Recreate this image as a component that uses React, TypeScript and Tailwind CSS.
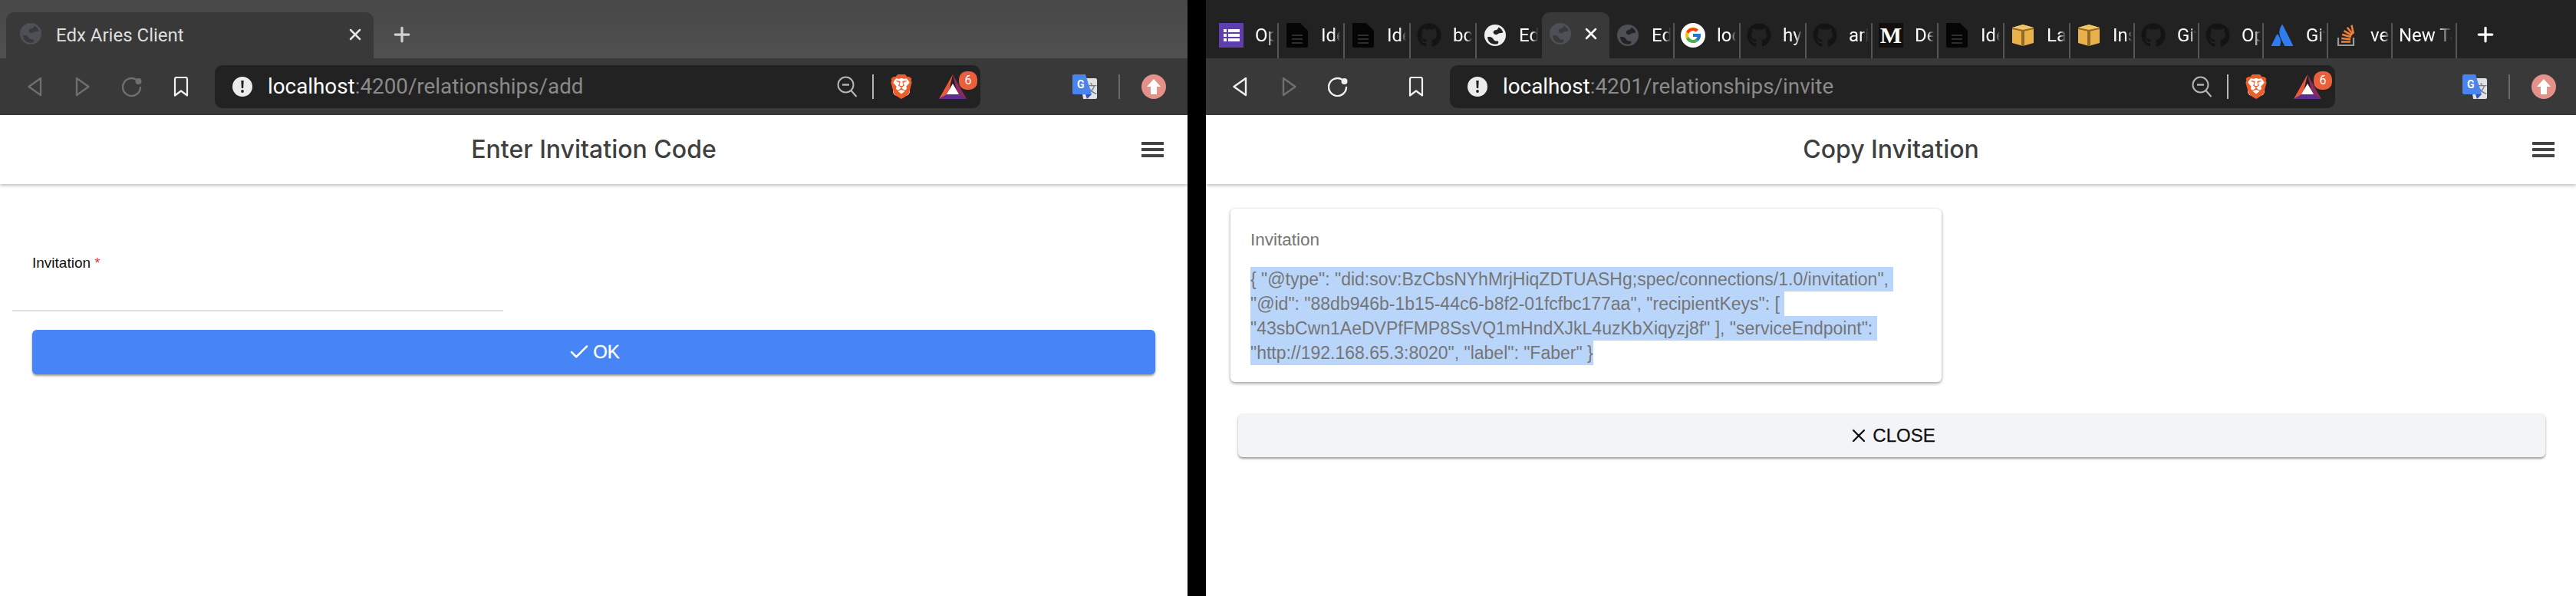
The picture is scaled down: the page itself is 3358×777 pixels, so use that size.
import { Check, Plus, X } from "lucide-react";
import { FaGithub } from "react-icons/fa";
import { FcGoogle } from "react-icons/fc";
import { SiAtlassian, SiBrave } from "react-icons/si";

const page = "font-['Liberation_Sans',Arial,sans-serif]";
const title = "font-['Inter','Liberation_Sans',sans-serif]";
const ui = "font-['Roboto','Liberation_Sans',sans-serif]";

function Globe({ fill, cut }: { fill: string; cut: string }) {
  return (
    <svg viewBox="0 0 28 28" className="h-[28px] w-[28px] shrink-0">
      <circle cx="14" cy="14" r="14" fill={fill} />
      <path d="M14 2.5c3 .2 6 1.500 8 3.800-1.200 1.800-3 2-4.500 3.400-1.400 1.300-1 3-3.500 3.300-2.800.3-4.500-1.500-3.800-3.700.5-1.600 2.500-2 3.300-3.300.5-1 .3-2.400.5-3.500z" fill={cut} transform="rotate(24 14 14)" />
      <path d="M4 16.500c2-.8 4.500-.5 6.200.8 1.600 1.200 2 3.200 3.800 3.900 1.500.5 3-.2 4 .8.800.9.200 2.300-.8 3.300-3.500 1-7.800.2-10.400-2.300C5.200 21.500 4.300 19 4 16.500z" fill={cut} />
    </svg>
  );
}

function DocIcon() {
  return (
    <svg viewBox="0 0 28 32" className="h-[32px] w-[28px] shrink-0">
      <path d="M1 0h17l10 10v20a2 2 0 0 1-2 2H2a2 2 0 0 1-2-2V1a1 1 0 0 1 1-1z" fill="#050505" />
      <path d="M7 15h14v2H7zM7 20h14v2H7zM7 25h14v2H7z" fill="#2e2e2e" />
    </svg>
  );
}

function FormsIcon() {
  return (
    <svg viewBox="0 0 32 32" className="h-[32px] w-[32px] shrink-0">
      <rect width="32" height="32" fill="#5f3eb0" />
      <path d="M6 8h4v4H6zM12 8h15v4H12zM6 14h4v4H6zM12 14h15v4H12zM6 20h4v4H6zM12 20h15v4H12z" fill="#fff" />
    </svg>
  );
}

function BoxIcon() {
  return (
    <svg viewBox="0 0 28 28" className="h-[28px] w-[28px] shrink-0">
      <path d="M14 0l14 4v20l-14 4-14-4V4z" fill="#e8b14a" />
      <path d="M0 4l14-4 14 4-14 3z" fill="#f2c566" />
      <path d="M12 7h4v21h-4z" fill="#8f6a2a" />
      <path d="M0 4l14 3 14-3v2L14 9 0 6z" fill="#8f6a2a" />
    </svg>
  );
}

function StackIcon() {
  return (
    <svg viewBox="0 0 24 28" className="h-[28px] w-[24px] shrink-0">
      <path d="M1 17v10h20V17" fill="none" stroke="#9a9a9a" strokeWidth="2.200" />
      <path d="M5 22.500h12M5.200 18l12 1.200M6.200 13l11.600 3.200M8.500 8.200l10.300 6M12.800 3.800l7.200 9M18.500.8l2.300 11" fill="none" stroke="#ef8236" strokeWidth="2.600" />
    </svg>
  );
}

function BackIcon({ color, flip }: { color: string; flip?: boolean }) {
  return (
    <svg viewBox="0 0 20 26" className={`h-[26px] w-[20px] ${flip ? "-scale-x-100" : ""}`}>
      <path d="M18 2L2.500 13 18 24z" fill="none" stroke={color} strokeWidth="2.400" strokeLinejoin="round" />
    </svg>
  );
}

function ReloadIcon({ color }: { color: string }) {
  return (
    <svg viewBox="0 0 26 26" className="h-[26px] w-[26px]">
      <path d="M17.500 3.200A11.500 11.500 0 1 0 24 14" fill="none" stroke={color} strokeWidth="2.400" strokeLinecap="round" />
      <circle cx="21.500" cy="6" r="4" fill={color} />
    </svg>
  );
}

function BookmarkIcon() {
  return (
    <svg viewBox="0 0 20 26" className="h-[26px] w-[20px]">
      <path d="M2 3a2 2 0 0 1 2-2h12a2 2 0 0 1 2 2v21.500l-8-6-8 6z" fill="none" stroke="#f2f2f2" strokeWidth="2.200" strokeLinejoin="round" />
    </svg>
  );
}

function InfoIcon() {
  return (
    <svg viewBox="0 0 26 26" className="h-[26px] w-[26px] shrink-0">
      <circle cx="13" cy="13" r="13" fill="#ececec" />
      <path d="M11.300 5h3.400l-.5 10h-2.400z" fill="#222" />
      <circle cx="13" cy="19" r="1.900" fill="#222" />
    </svg>
  );
}

function ZoomOutIcon() {
  return (
    <svg viewBox="0 0 26 28" className="h-[28px] w-[26px] shrink-0">
      <circle cx="11.500" cy="11.500" r="10" fill="none" stroke="#b5b5b5" strokeWidth="2" />
      <path d="M7 11.500h9" stroke="#b5b5b5" strokeWidth="2.400" />
      <path d="M18.500 19l7 8" stroke="#b5b5b5" strokeWidth="2.200" />
    </svg>
  );
}

function MenuIcon() {
  return (
    <svg viewBox="0 0 29 20" className="h-[20px] w-[29px] justify-self-end">
      <path d="M0 0h29v4H0zM0 8h29v4H0zM0 16h29v4H0z" fill="#444444" />
    </svg>
  );
}

function BraveIcon() {
  return (
    <div className="relative h-[36px] w-[32px] shrink-0">
      <div className="absolute inset-x-[5px] inset-y-[6px] rounded-[6px] bg-white" />
      <SiBrave className="absolute inset-0 h-[36px] w-[32px] text-[#ee5e2a]" />
    </div>
  );
}

function BatIcon() {
  return (
    <div className="relative h-[32px] w-[36px] shrink-0">
      <svg viewBox="0 0 36 32" className="h-[32px] w-[36px]">
        <path d="M18 0L0 32l12-6z" fill="#e9573f" />
        <path d="M18 0l18 32-12-6z" fill="#8c2a5f" />
        <path d="M0 32l12-7h12l12 7z" fill="#5e2d8f" />
        <path d="M18 12l8 14H10z" fill="#fff" />
      </svg>
      <span className={`absolute -top-[4px] -right-[14px] flex h-[24px] w-[24px] items-center justify-center rounded-[10px] bg-[#e9603c] text-[16px] leading-none text-white ${ui}`}>
        6
      </span>
    </div>
  );
}

function TranslateIcon() {
  return (
    <svg viewBox="0 0 32 32" className="h-[32px] w-[32px] shrink-0">
      <path d="M10 5h20a2 2 0 0 1 2 2v23a2 2 0 0 1-2 2H14z" fill="#dfe1e3" />
      <text x="17" y="24" fontSize="15" fill="#6d7c82" fontFamily="Noto Sans CJK SC, sans-serif">文</text>
      <path d="M2 0h15l8 26H2a2 2 0 0 1-2-2V2a2 2 0 0 1 2-2z" fill="#4a84ee" />
      <path d="M17 26h8l-6 6z" fill="#3a4fb0" />
      <text x="6" y="18" fontSize="14" fontWeight="700" fill="#fff" fontFamily="Roboto, sans-serif">G</text>
    </svg>
  );
}

function UploadBadge() {
  return (
    <div className="flex h-[32px] w-[32px] shrink-0 items-center justify-center rounded-full bg-[#e4918a]">
      <svg viewBox="0 0 18 20" className="h-[20px] w-[18px]">
        <path d="M9 0l9 10h-5v10H5V10H0z" fill="#fff" />
      </svg>
    </div>
  );
}

type TabItem = {
  icon: React.ReactNode;
  label: string;
  width: string;
  noDivider?: boolean;
};

const github = <FaGithub className="h-[32px] w-[32px] shrink-0 text-[#141414]" />;
const whiteGlobe = <Globe fill="#f0f0f0" cut="#222222" />;
const greyGlobe = <Globe fill="#4d5056" cut="#222222" />;

const tabs: TabItem[] = [
  { icon: <FormsIcon />, label: "Open", width: "w-[86px]" },
  { icon: <DocIcon />, label: "Iden", width: "w-[86px]" },
  { icon: <DocIcon />, label: "Iden", width: "w-[86px]" },
  { icon: github, label: "bcgo", width: "w-[86px]" },
  { icon: whiteGlobe, label: "Edx", width: "w-[85px]", noDivider: true },
];

const tabsAfter: TabItem[] = [
  { icon: greyGlobe, label: "Edx", width: "w-[85px]" },
  {
    icon: (
      <div className="flex h-[32px] w-[32px] shrink-0 items-center justify-center rounded-full bg-white">
        <FcGoogle className="h-[24px] w-[24px]" />
      </div>
    ),
    label: "local",
    width: "w-[86px]",
  },
  { icon: github, label: "hype", width: "w-[86px]" },
  { icon: github, label: "aries", width: "w-[86px]" },
  {
    icon: (
      <div className="flex h-[32px] w-[32px] shrink-0 items-center justify-center bg-[#120f0e] font-['Liberation_Serif',serif] text-[30px] leading-none font-bold text-white">
        M
      </div>
    ),
    label: "Dec",
    width: "w-[86px]",
  },
  { icon: <DocIcon />, label: "Iden", width: "w-[86px]" },
  { icon: <BoxIcon />, label: "Lab", width: "w-[86px]" },
  { icon: <BoxIcon />, label: "Inst", width: "w-[84px]" },
  { icon: github, label: "Git", width: "w-[84px]" },
  { icon: github, label: "Ope", width: "w-[84px]" },
  { icon: <SiAtlassian className="h-[28px] w-[28px] shrink-0 text-[#2f7bf0]" />, label: "Git", width: "w-[84px]" },
  { icon: <StackIcon />, label: "vers", width: "w-[84px]" },
];

function CompactTab({ tab }: { tab: TabItem }) {
  return (
    <div className={`flex h-[46px] shrink-0 items-start gap-[15px] pl-[8px] ${tab.width} ${tab.noDivider ? "" : "border-r-2 border-[#555555]"}`}>
      <div className="flex h-[32px] w-[32px] shrink-0 items-center justify-center">{tab.icon}</div>
      <span className={`h-[32px] w-[25px] overflow-hidden text-[24px] leading-[32px] whitespace-nowrap text-white [mask-image:linear-gradient(to_right,black_65%,transparent)] ${ui}`}>
        {tab.label}
      </span>
    </div>
  );
}

function RightTabStrip() {
  return (
    <div className="flex h-[76px] items-end bg-[#222222] pl-[9px]">
      {tabs.map((tab, i) => (
        <CompactTab key={i} tab={tab} />
      ))}
      <div className="flex h-[60px] w-[88px] shrink-0 items-start gap-[14px] rounded-t-[10px] bg-[#393939] pt-[14px] pl-[10px]">
        <Globe fill="#4d5056" cut="#393939" />
        <X className="mt-[2px] h-[24px] w-[24px] text-white" strokeWidth={2.5} />
      </div>
      {tabsAfter.map((tab, i) => (
        <CompactTab key={i} tab={tab} />
      ))}
      <div className={`flex h-[46px] w-[84px] shrink-0 border-r-2 border-[#555555] pl-[8px] text-[24px] leading-[32px] whitespace-nowrap text-white ${ui}`}>
        <span className="w-[70px] overflow-hidden [mask-image:linear-gradient(to_right,black_70%,transparent)]">New Tab</span>
      </div>
      <div className="flex h-[46px] items-start pl-[22px]">
        <Plus className="h-[30px] w-[30px] text-white" strokeWidth={2.6} />
      </div>
    </div>
  );
}

function LeftTabStrip() {
  return (
    <div className="flex h-[76px] items-end bg-linear-to-b from-[#484848] to-[#505050] pl-[8px]">
      <div className="flex h-[60px] w-[479px] items-start rounded-t-[10px] bg-[#393939] pt-[14px] pl-[18px]">
        <Globe fill="#4d5056" cut="#393939" />
        <span className={`ml-[19px] text-[24px] leading-[32px] text-[#dedede] ${ui}`}>Edx Aries Client</span>
        <X className="mt-[3px] mr-[12px] ml-auto h-[24px] w-[24px] text-[#e4e4e4]" strokeWidth={2.5} />
      </div>
      <div className="flex h-[60px] items-start pt-[14px] pl-[22px]">
        <Plus className="h-[30px] w-[30px] text-[#d0d0d0]" strokeWidth={2.6} />
      </div>
    </div>
  );
}

function AddressBar({ port, path, width }: { port: string; path: string; width: string }) {
  return (
    <div className={`flex h-[56px] shrink-0 items-center rounded-[10px] bg-[#222222] pr-[18px] pl-[23px] ${width}`}>
      <InfoIcon />
      <span className={`ml-[20px] text-[27.8px] leading-none whitespace-nowrap text-[#8a8a8a] ${ui}`}>
        <span className="text-white">localhost</span>:{port}
        {path}
      </span>
      <div className="ml-auto flex items-center">
        <ZoomOutIcon />
        <div className="mx-[20px] h-[32px] w-[2px] bg-[#b5b5b5]" />
        <BraveIcon />
        <div className="w-[33px]" />
        <BatIcon />
      </div>
    </div>
  );
}

function ToolbarExtras({ gap }: { gap: string }) {
  return (
    <div className={`flex items-center ${gap}`}>
      <TranslateIcon />
      <div className="mx-[28px] h-[32px] w-[2px] bg-[#6a6a6a]" />
      <UploadBadge />
    </div>
  );
}

function PageHeader({ text, pad }: { text: string; pad: string }) {
  return (
    <header className={`grid h-[90px] grid-cols-[1fr_auto_1fr] items-center bg-white shadow-[0_2px_4px_rgba(0,0,0,0.25)] ${pad}`}>
      <div />
      <h1 className={`text-[32px] leading-none font-medium text-[#3f3f3f] ${title}`}>{text}</h1>
      <MenuIcon />
    </header>
  );
}

function InviteLine({ text, extra }: { text: string; extra: string }) {
  return <span className={`block h-[32px] w-fit bg-[#b9d5fa] ${extra}`}>{text}</span>;
}

export default function App() {
  return (
    <div className="flex h-[777px] w-[3358px] overflow-hidden bg-black">
      <section className="flex w-[1548px] shrink-0 flex-col bg-white">
        <LeftTabStrip />
        <div className="flex h-[74px] items-center bg-[#393939] pl-[35px]">
          <BackIcon color="#6f6f6f" />
          <div className="ml-[43px]"><BackIcon color="#6f6f6f" flip /></div>
          <div className="ml-[41px]"><ReloadIcon color="#6f6f6f" /></div>
          <div className="mr-[34px] ml-[41px]"><BookmarkIcon /></div>
          <AddressBar port="4200" path="/relationships/add" width="w-[998px]" />
          <ToolbarExtras gap="ml-[120px]" />
        </div>
        <PageHeader text="Enter Invitation Code" pad="px-[31px]" />
        <form className="flex flex-col">
          <div className="mt-[91px] ml-[16px] h-[75px] w-[640px] border-b-2 border-[#e0e0e0] pl-[26px]">
            <label className={`text-[19px] leading-[24px] text-[#111111] ${page}`}>
              Invitation <span className="text-[#e53935]">*</span>
            </label>
          </div>
          <button
            type="button"
            className={`mt-[24px] mr-[42px] ml-[42px] flex h-[58px] items-center justify-center gap-[3px] rounded-[6px] bg-[#4784f6] text-[24px] text-white shadow-[0_2px_3px_rgba(0,0,0,0.4)] [-webkit-text-stroke:0.3px_currentColor] ${page}`}
          >
            <Check className="h-[30px] w-[30px]" strokeWidth={2} />
            OK
          </button>
        </form>
      </section>

      <div className="w-[24px] shrink-0" />

      <section className="flex min-w-0 flex-1 flex-col bg-white">
        <RightTabStrip />
        <div className="flex h-[74px] items-center bg-[#393939] pl-[34px]">
          <BackIcon color="#f0f0f0" />
          <div className="ml-[45px]"><BackIcon color="#6f6f6f" flip /></div>
          <div className="ml-[40px]"><ReloadIcon color="#f0f0f0" /></div>
          <div className="mr-[34px] ml-[79px]"><BookmarkIcon /></div>
          <AddressBar port="4201" path="/relationships/invite" width="w-[1154px]" />
          <ToolbarExtras gap="ml-[166px]" />
        </div>
        <PageHeader text="Copy Invitation" pad="px-[28px]" />
        <div className="mt-[32px] ml-[32px] h-[226px] w-[927px] rounded-[6px] bg-white pt-[28px] pl-[26px] shadow-[0_2px_4px_rgba(0,0,0,0.35),0_0_3px_rgba(0,0,0,0.08)]">
          <h2 className={`h-[48px] text-[22.5px] leading-[26px] text-[#757575] ${page}`}>Invitation</h2>
          <div className={`text-[23px] leading-[32px] whitespace-nowrap text-[#757575] ${page}`}>
            <InviteLine text={'{ "@type": "did:sov:BzCbsNYhMrjHiqZDTUASHg;spec/connections/1.0/invitation",'} extra="pr-[6px]" />
            <InviteLine text={'"@id": "88db946b-1b15-44c6-b8f2-01fcfbc177aa", "recipientKeys": ['} extra="pr-[6px]" />
            <InviteLine text={'"43sbCwn1AeDVPfFMP8SsVQ1mHndXJkL4uzKbXiqyzj8f" ], "serviceEndpoint":'} extra="pr-[6px]" />
            <InviteLine text={'"http://192.168.65.3:8020", "label": "Faber" }'} extra="" />
          </div>
        </div>
        <button
          type="button"
          className={`mt-[41px] mr-[40px] ml-[42px] flex h-[57px] items-center justify-center gap-[4px] rounded-[6px] bg-[#f3f4f7] text-[24px] text-[#111111] shadow-[0_2px_3px_rgba(0,0,0,0.4)] [-webkit-text-stroke:0.3px_currentColor] ${page}`}
        >
          <X className="h-[28px] w-[28px]" strokeWidth={2} />
          CLOSE
        </button>
      </section>
    </div>
  );
}
